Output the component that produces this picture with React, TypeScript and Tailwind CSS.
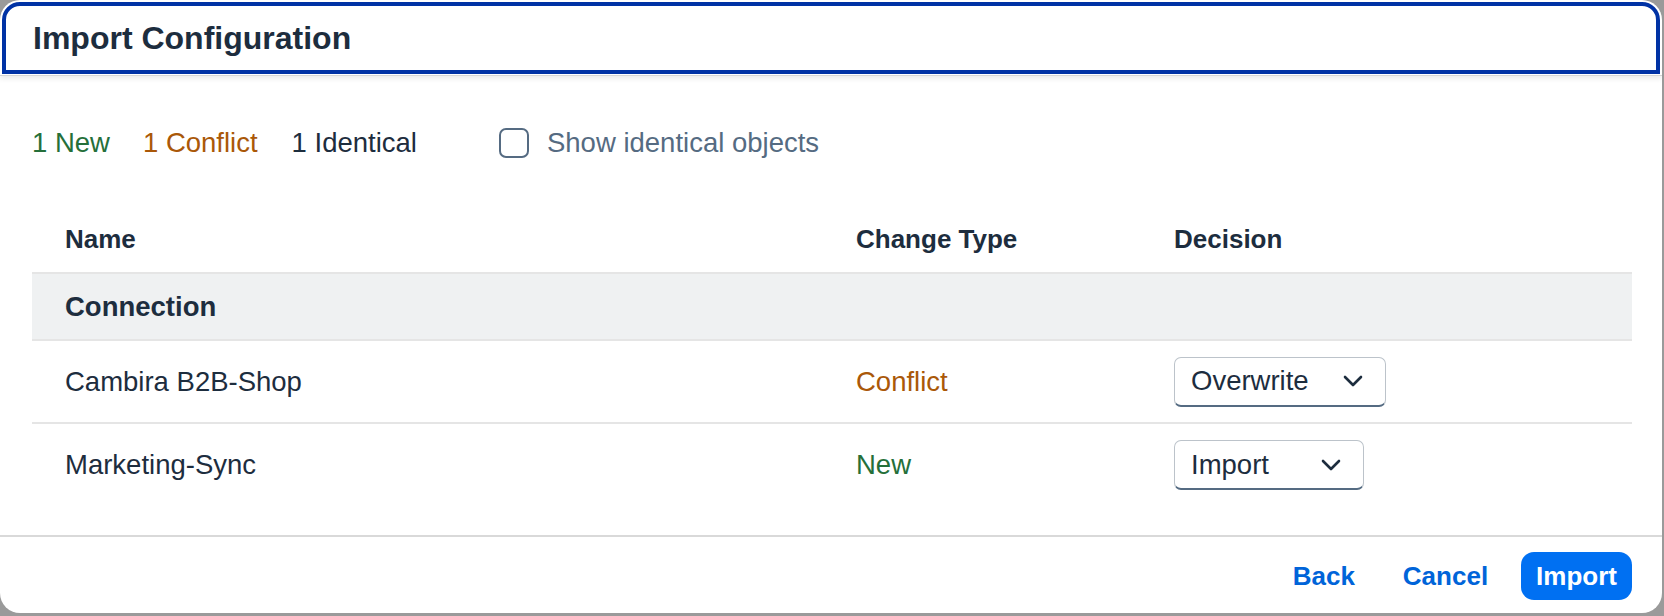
const rows = [
  { name: "Cambira B2B-Shop", change: "Conflict", tone: "text-[#aa5808]", decision: "Overwrite", width: "w-[212px]" },
  { name: "Marketing-Sync", change: "New", tone: "text-[#256f3a]", decision: "Import", width: "w-[190px]" },
];

function Chevron() {
  return (
    <svg width="20" height="12" viewBox="0 0 20 12" fill="none" className="text-[#1d2d3e]">
      <path d="M2 2 L10 10 L18 2" stroke="currentColor" strokeWidth="2.6" strokeLinecap="round" strokeLinejoin="round" />
    </svg>
  );
}

function Select({ value, width }: { value: string; width: string }) {
  return (
    <button
      className={`${width} h-[50px] flex items-center justify-between pl-[16px] pr-[22px] bg-white border border-[#bcc3ca] border-b-2 border-b-[#556b82] rounded-[7px] text-[27.5px] text-[#1d2d3e]`}
    >
      <span>{value}</span>
      <Chevron />
    </button>
  );
}

export default function App() {
  return (
    <div className="w-[1664px] h-[616px] bg-[#9a9a9a] font-['Liberation_Sans',Arial,sans-serif]">
      <div className="w-[1662px] h-[613px] bg-white rounded-[20px] flex flex-col overflow-hidden">
        {/* Header */}
        <div className="shadow-[0_3px_5px_rgba(0,0,0,0.08)] border-b border-[#d5d5d5] pt-[2px] px-[2px] pb-[1px]">
          <div className="h-[72px] border-4 border-[#0032a5] rounded-t-[18px] flex items-center pl-[27px]">
            <h1 className="text-[32px] font-bold text-[#1d2d3e]">Import Configuration</h1>
          </div>
        </div>

        {/* Content */}
        <div className="flex-1 pl-[32px] pr-[30px]">
          {/* Summary */}
          <div className="mt-[46px] h-[42px] flex items-center text-[27.5px]">
            <span className="text-[#256f3a]">1 New</span>
            <span className="ml-[33px] text-[#aa5808]">1 Conflict</span>
            <span className="ml-[34px] text-[#1d2d3e]">1 Identical</span>
            <label className="ml-[82px] flex items-center gap-[18px]">
              <span className="w-[30px] h-[30px] rounded-[7px] border-2 border-[#556b82] bg-white" />
              <span className="text-[#556b82]">Show identical objects</span>
            </label>
          </div>

          {/* Table */}
          <div className="mt-[43px] text-[27.5px] text-[#1d2d3e]">
            <div className="h-[67px] grid grid-cols-[791px_318px_1fr] items-center border-b-2 border-[#e5e5e5] text-[26px] font-bold">
              <div className="pl-[33px]">Name</div>
              <div className="pl-[33px]">Change Type</div>
              <div className="pl-[33px]">Decision</div>
            </div>
            <div className="h-[67px] flex items-center pl-[33px] bg-[#eff1f2] border-b-2 border-[#e5e5e5] font-bold">
              Connection
            </div>
            {rows.map((r, i) => (
              <div
                key={r.name}
                className={`grid grid-cols-[791px_318px_1fr] items-center ${i === 0 ? "h-[83px] border-b-2 border-[#e5e5e5]" : "h-[82px]"}`}
              >
                <div className="pl-[33px]">{r.name}</div>
                <div className={`pl-[33px] ${r.tone}`}>{r.change}</div>
                <div className="pl-[33px]">
                  <Select value={r.decision} width={r.width} />
                </div>
              </div>
            ))}
          </div>
        </div>

        {/* Footer */}
        <div className="h-[78px] border-t-2 border-[#d9d9d9] flex items-start justify-end gap-[18px] pt-[15px] pr-[30px]">
          <button className="h-[48px] px-[15px] text-[26px] font-bold text-[#0064d9]">Back</button>
          <button className="h-[48px] px-[15px] text-[26px] font-bold text-[#0064d9]">Cancel</button>
          <button className="h-[48px] px-[15px] rounded-[13px] bg-[#0070f2] text-[26px] font-bold text-white">Import</button>
        </div>
      </div>
    </div>
  );
}
